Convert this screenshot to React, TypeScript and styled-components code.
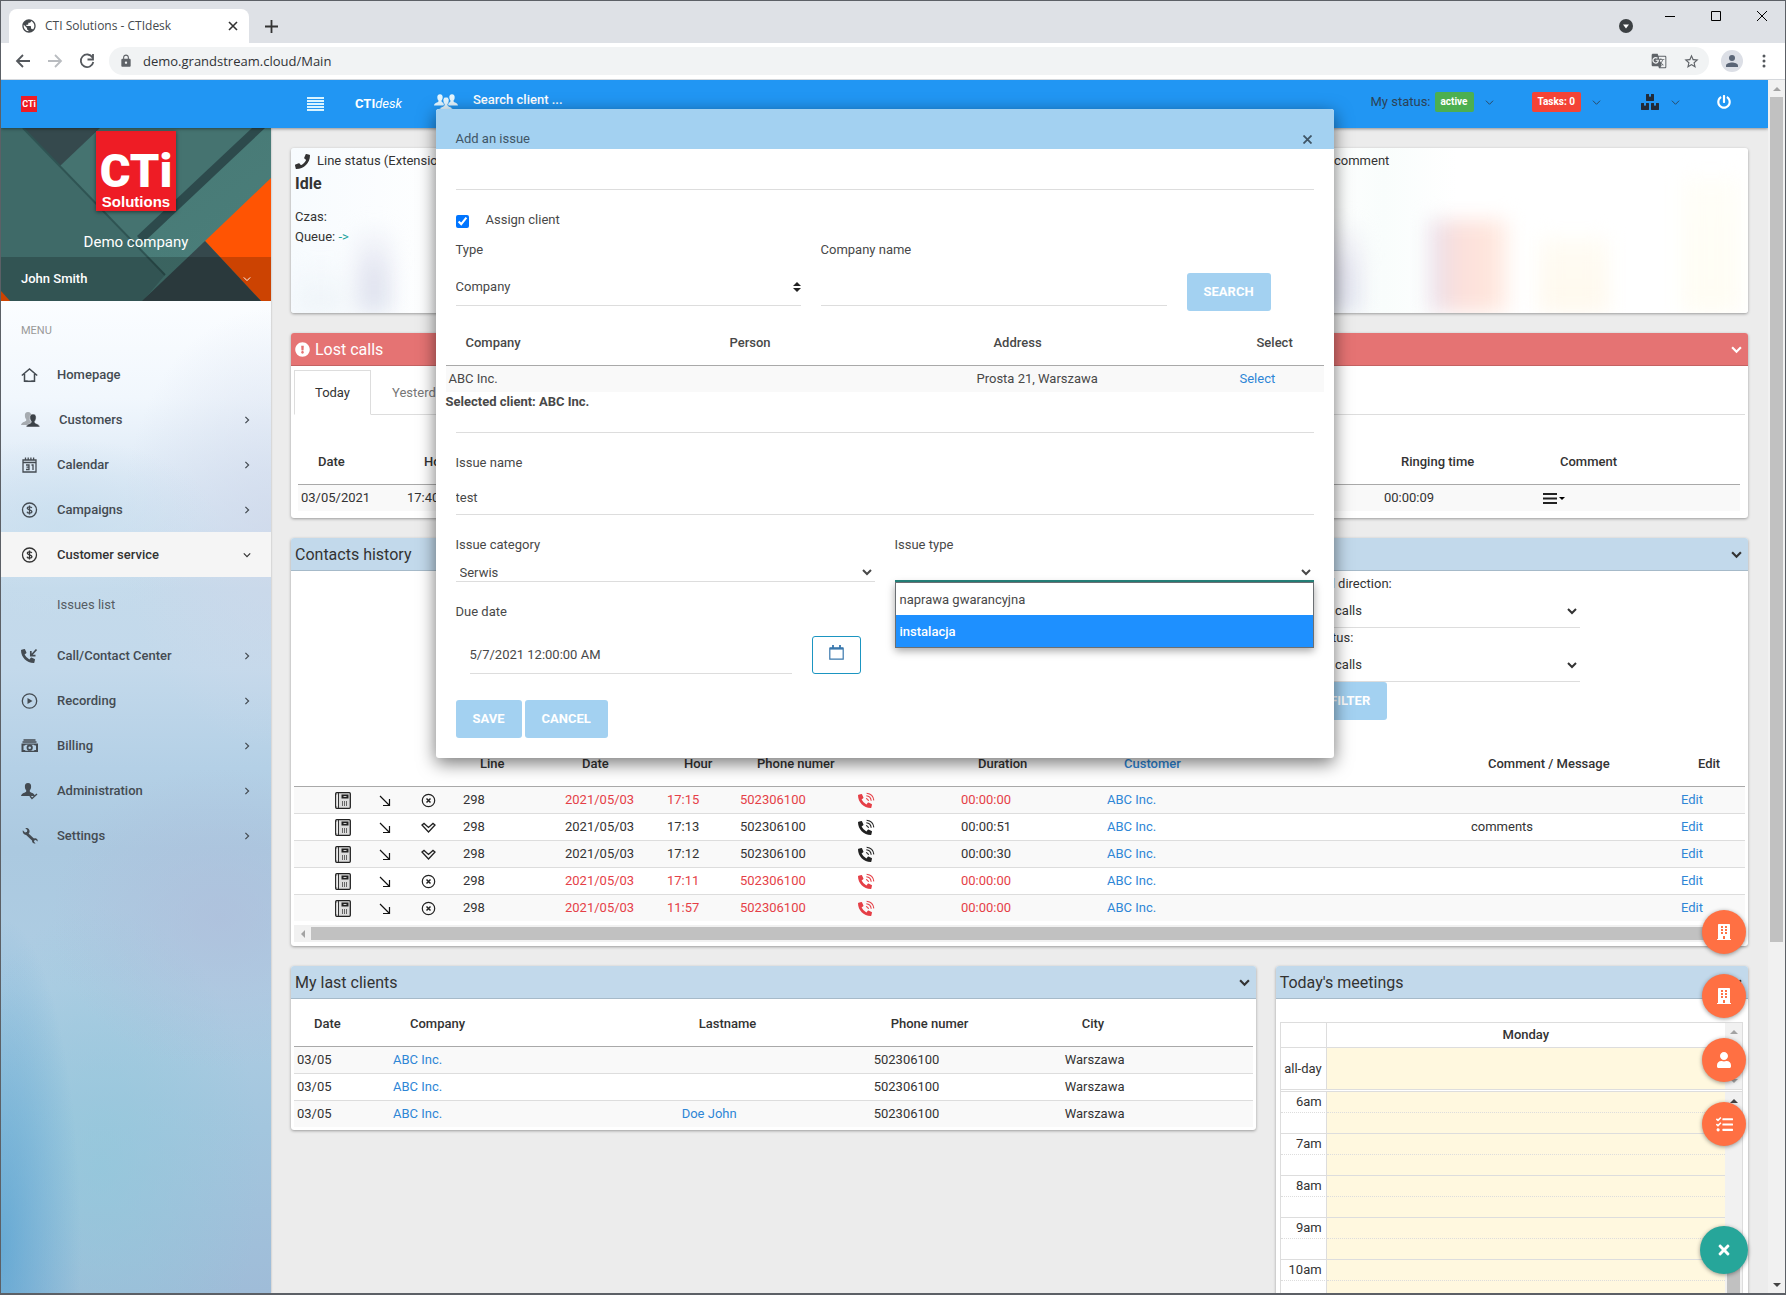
import React from "react";
import styled, { createGlobalStyle, css } from "styled-components";
import {
  FaBoxes,
  FaBuilding,
  FaExclamationCircle,
  FaPhone,
  FaPhoneAlt,
  FaPowerOff,
  FaTasks,
  FaTimes,
  FaUser,
  FaWrench,
} from "react-icons/fa";
import { MdGTranslate, MdLock, MdPublic, MdStarBorder } from "react-icons/md";

const c = {
  text: "#333",
  link: "#2e86d6",
  danger: "#e53f47",
  primary: "#2196f3",
  soft: "#a3d1f1",
  panel: "#c2d9eb",
  line: "#ddd",
};

const Global = createGlobalStyle`
  *, *::before, *::after { box-sizing: border-box; }
  body { margin: 0; color: ${c.text}; font: 13px/20px Roboto, "Liberation Sans", sans-serif; }
  button, input, select { font: inherit; color: inherit; }
  button { cursor: pointer; border: 0; padding: 0; background: none; }
  a { color: ${c.link}; text-decoration: none; }
  svg { display: block; flex: none; }
`;

/* ---------- browser window ---------- */

const Window = styled.div`
  display: flex;
  flex-direction: column;
  height: 100vh;
  overflow: hidden;
  border: 1px solid #5c6066;
  border-bottom-width: 2px;
  background: #fff;
`;
const TabStrip = styled.div`
  display: flex;
  align-items: flex-end;
  height: 42px;
  padding-left: 8px;
  background: #dee1e6;
  font: 12px/20px "Open Sans", "Noto Sans", sans-serif;
`;
const BrowserTab = styled.div`
  display: flex;
  align-items: center;
  gap: 8px;
  width: 240px;
  height: 34px;
  padding: 0 10px 0 12px;
  border-radius: 8px 8px 0 0;
  background: #fff;
  color: #45494d;
  span { flex: 1; }
`;
const NewTab = styled.button`
  display: grid;
  place-items: center;
  width: 28px;
  height: 34px;
  margin-left: 8px;
`;
const WindowButtons = styled.div`
  display: flex;
  align-self: flex-start;
  margin-left: auto;
`;
const WindowButton = styled.button`
  display: grid;
  place-items: center;
  width: 46px;
  height: 29px;
`;
const TabSearch = styled.button`
  display: grid;
  place-items: center;
  width: 42px;
  height: 50px;
`;
const Toolbar = styled.div`
  display: flex;
  align-items: center;
  height: 37px;
  padding: 0 18px 0 14px;
  border-bottom: 1px solid #d5d8dc;
  color: #5f6368;
`;
const NavButtons = styled.div`
  display: flex;
  gap: 16px;
  margin-right: 14px;
`;
const AddressBar = styled.div`
  display: flex;
  flex: 1;
  align-items: center;
  gap: 8px;
  height: 28px;
  padding: 0 9px 0 10px;
  border-radius: 14px;
  background: #f1f3f4;
`;
const Address = styled.input`
  flex: 1;
  min-width: 0;
  border: 0;
  outline: 0;
  background: none;
  color: #303236;
  font: 13px/20px "Open Sans", "Noto Sans", sans-serif;
`;
const AddressIcons = styled.div`
  display: flex;
  align-items: center;
  gap: 16px;
`;
const Avatar = styled.div`
  display: grid;
  place-items: center;
  width: 22px;
  height: 22px;
  margin: 0 18px 0 12px;
  border-radius: 50%;
  background: #dcdfe6;
  color: #5a6576;
`;

/* ---------- scroll bars ---------- */

const ScrollTrack = styled.div<{ $row?: boolean; $w: number }>`
  display: flex;
  flex: none;
  flex-direction: ${(p) => (p.$row ? "row" : "column")};
  align-items: center;
  justify-content: space-between;
  ${(p) => (p.$row ? `height: ${p.$w}px;` : `width: ${p.$w}px;`)}
  background: #f1f1f1;
`;
const Thumb = styled.div<{ $grow?: number; $row?: boolean }>`
  flex: ${(p) => p.$grow ?? 1};
  align-self: stretch;
  margin: ${(p) => (p.$row ? "2px 0" : "0 2px")};
  background: #c1c1c1;
`;
const TrackSpace = styled.div<{ $grow: number }>`
  flex: ${(p) => p.$grow};
`;
const ArrowBox = styled.div`
  display: grid;
  place-items: center;
  width: 17px;
  height: 17px;
`;
const Arrow = ({ dir, color = "#a3a3a3" }: { dir: "up" | "down" | "left" | "right"; color?: string }) => {
  const d = { up: "M0 6 4 2l4 4z", down: "M0 2l4 4 4-4z", left: "M6 0 2 4l4 4z", right: "M2 0l4 4-4 4z" }[dir];
  return (
    <ArrowBox>
      <svg width="8" height="8" viewBox="0 0 8 8" fill={color}><path d={d} /></svg>
    </ArrowBox>
  );
};

/* ---------- page shell ---------- */

const Viewport = styled.div`
  display: flex;
  flex: 1;
  min-height: 0;
`;
const Page = styled.div`
  position: relative;
  display: flex;
  flex: 1;
  flex-direction: column;
  min-width: 0;
  overflow: hidden;
  background: #ececec;
`;
const Header = styled.header`
  z-index: 1;
  display: flex;
  flex: none;
  height: 48px;
  padding: 0 37px 0 20px;
  background: ${c.primary};
  box-shadow: 0 1px 3px rgba(0, 0, 0, 0.4);
`;
const HeaderLeft = styled.div`
  display: flex;
  align-items: center;
  width: 286px;
`;
const Brand = styled.a`
  padding-left: 31px;
  color: #fff;
  white-space: nowrap;
`;
const BrandSlot = styled.div`
  display: flex;
  align-items: center;
  width: 127px;
`;
const SearchSlot = styled.div`
  display: flex;
  flex: 1;
  gap: 15px;
  padding-top: 10px;
  svg { margin-top: 4px; }
`;
const SearchField = styled.input`
  width: 260px;
  height: 20px;
  padding: 0;
  border: 0;
  outline: 0;
  background: none;
  font-weight: 500;
  &::placeholder { color: #fff; opacity: 1; }
`;
const HeaderRight = styled.div`
  display: flex;
  align-items: flex-start;
  padding-top: 12px;
  color: #2c4257;
`;
const HeaderItem = styled.button<{ $after: number }>`
  display: flex;
  align-items: center;
  height: 20px;
  margin-right: ${(p) => p.$after}px;
`;
const ItemGap = styled.span`
  width: 12px;
`;
const Badge = styled.span<{ $bg: string }>`
  padding: 0 6px;
  margin: 0 11px 0 4px;
  border-radius: 2px;
  background: ${(p) => p.$bg};
  color: #fff;
  font-size: 10px;
  font-weight: 700;
`;
const SmallLogo = styled.span`
  display: grid;
  place-items: center;
  width: 16px;
  height: 16px;
  background: #ee1c25;
  color: #fff;
  font: 700 9px/9px Roboto, sans-serif;
`;
const Body = styled.div`
  display: flex;
  flex: 1;
  min-height: 0;
`;

/* ---------- side menu ---------- */

const Sidebar = styled.aside`
  width: 270px;
  flex: none;
  overflow: hidden;
  box-shadow: 0 0 2px rgba(0, 0, 0, 0.25);
  background:
    radial-gradient(ellipse 80px 330px at 0 1120px, rgba(85, 162, 210, 0.75), transparent),
    radial-gradient(ellipse 170px 150px at 220px 790px, rgba(176, 188, 218, 0.6), transparent),
    radial-gradient(ellipse 160px 260px at 100px 1040px, rgba(145, 200, 219, 0.7), transparent),
    radial-gradient(ellipse 160px 90px at 60px 400px, rgba(200, 222, 238, 0.8), transparent),
    radial-gradient(ellipse 150px 220px at 270px 400px, rgba(208, 216, 234, 0.7), transparent),
    linear-gradient(#fbfdff 173px, #f1f7fd 270px, #dbe8f5 360px, #c4daeb 460px, #c3d9eb 540px, #b4d0e6 640px, #abc9e0 720px, #aecde3 860px, #a3c6de 1000px, #9fbcd8 1166px);
`;
const Profile = styled.div`
  position: relative;
  display: flex;
  flex-direction: column;
  align-items: center;
  height: 173px;
  padding-top: 3px;
  color: #fff;
`;
const ProfileArt = styled.svg`
  position: absolute;
  inset: 0;
  width: 100%;
  height: 100%;
`;
const Logo = styled.div`
  position: relative;
  display: flex;
  flex-direction: column;
  align-items: center;
  justify-content: flex-end;
  width: 80px;
  height: 80px;
  padding-bottom: 1px;
  background: #ee1c25;
  box-shadow: 0 1px 4px rgba(0, 0, 0, 0.5);
`;
const LogoMark = styled.div`
  font: 900 47px/44px Roboto, sans-serif;
`;
const LogoSub = styled.div`
  font: 700 15px/17px "Liberation Sans", sans-serif;
`;
const CompanyName = styled.div`
  position: relative;
  margin-top: 20px;
  font-size: 15px;
  line-height: 22px;
`;
const UserBar = styled.button`
  position: relative;
  display: flex;
  align-items: center;
  justify-content: space-between;
  width: 100%;
  height: 44px;
  margin-top: auto;
  padding: 0 20px;
  background: rgba(0, 0, 0, 0.2);
  color: #fff;
  font-weight: 500;
`;
const MenuTitle = styled.div`
  padding: 20px 20px 11px;
  color: #999;
  font-size: 11px;
`;
const MenuList = styled.ul`
  margin: 0;
  padding: 0;
  list-style: none;
`;
const MenuLink = styled.a<{ $active?: boolean }>`
  display: flex;
  align-items: center;
  height: 45px;
  padding: 0 20px;
  background: ${(p) => (p.$active ? "#f5f5f5" : "transparent")};
  color: ${(p) => (p.$active ? "#333" : "#444b52")};
  font-weight: 500;
  span { flex: 1; padding-left: 18px; }
`;
const SubLink = styled.a`
  display: block;
  padding: 18px 20px 18px 56px;
  color: #555c63;
`;

/* ---------- cards and tables ---------- */

const Content = styled.main`
  flex: 1;
  min-width: 0;
  padding: 20px;
  display: flex;
  flex-direction: column;
  gap: 20px;
`;
const Card = styled.section`
  flex: none;
  border-radius: 3px;
  background: #fff;
  box-shadow: 0 1px 3px rgba(0, 0, 0, 0.35);
`;
const CardHead = styled.div<{ $alert?: boolean }>`
  display: flex;
  align-items: center;
  gap: 5px;
  height: 33px;
  padding: 1px 6px 0 4px;
  border-bottom: 1px solid rgba(0, 0, 0, 0.14);
  border-radius: 3px 3px 0 0;
  background: ${(p) => (p.$alert ? "#e57373" : c.panel)};
  color: ${(p) => (p.$alert ? "#fff" : c.text)};
  h2 { flex: 1; margin: 0; font-size: 16px; font-weight: 400; }
`;
const StatusCard = styled(Card)`
  position: relative;
  display: grid;
  grid-template-columns: 1039px 1fr;
  height: 165px;
  padding: 3px 4px;
  overflow: hidden;
  background: linear-gradient(90deg, #f7fbfe, #fff 12%, #fff 70%, #f9fdfc 75%, #fff 80%);
`;
const Blur = styled.div`
  position: absolute;
  inset: 0;
  filter: blur(10px);
  background:
    linear-gradient(#e6e8f300, #e2e4f0 40%, #dce4ef) 66px 75px / 34px 130px no-repeat,
    linear-gradient(#eef4f900, #e9f0f6) 5px 110px / 50px 80px no-repeat,
    linear-gradient(#e4e6f300, #e4e4ef 40%, #dde4ef) 1020px 70px / 50px 130px no-repeat,
    linear-gradient(90deg, #e6e0ee, #fbdfdb 35%, #ffe6dc 80%, #fff4ee) 1138px 72px / 80px 130px no-repeat,
    linear-gradient(#fffcf4, #fff7e9) 1248px 90px / 70px 120px no-repeat,
    linear-gradient(#fffef8, #fffdf3) 1390px 30px / 60px 150px no-repeat;
`;
const StatusBlock = styled.div`
  position: relative;
`;
const LineStatus = styled.div`
  display: flex;
  align-items: center;
  gap: 7px;
`;
const Idle = styled.h3`
  margin: 2px 0 12px;
  font-size: 16px;
  line-height: 22px;
  font-weight: 700;
`;
const TealText = styled.a`
  color: #1ba39c;
`;
const Tabs = styled.div`
  display: flex;
  height: 49px;
  margin: 0 3px;
  padding-top: 4px;
  box-shadow: inset 0 -1px #ddd;
`;
const Tab = styled.button<{ $on?: boolean }>`
  padding: 0 20px;
  border: 1px solid transparent;
  color: #777;
  ${(p) => p.$on && css`background: #fff; border-color: #ddd #ddd #fff; color: ${c.text};`}
`;
const Table = styled.table`
  width: 100%;
  table-layout: fixed;
  border-collapse: separate;
  border-spacing: 0;
  th {
    padding: 12px 20px;
    border-bottom: 1px solid #a9a9a9;
    text-align: left;
    font-weight: 500;
    white-space: nowrap;
  }
  td { padding: 3px; white-space: nowrap; }
  tbody tr + tr td { border-top: 1px solid ${c.line}; }
  tbody tr:nth-child(odd) td { background: #f9f9f9; }
  td svg { display: inline-block; vertical-align: middle; }
`;
const Pad = styled.div<{ $p: string }>`
  padding: ${(p) => p.$p};
`;
const Red = styled.span<{ $on: boolean }>`
  color: ${(p) => (p.$on ? c.danger : "inherit")};
`;
const Filters = styled.form`
  display: flex;
  flex-direction: column;
  align-items: flex-start;
  width: 267px;
  margin: 3px 168px 22px auto;
`;
const NativeSelect = styled.select<{ $h: number }>`
  width: 100%;
  height: ${(p) => p.$h}px;
  border: 0;
  border-bottom: 1px solid ${c.line};
  border-radius: 0;
  outline: 0;
  background: transparent;
`;
const SoftButton = styled.button`
  height: 38px;
  padding: 0 17px;
  border-radius: 3px;
  background: ${c.soft};
  color: #fff;
  font-weight: 700;
  text-transform: uppercase;
`;
const MenuButton = styled.button`
  display: flex;
  align-items: center;
  gap: 2px;
  height: 20px;
  svg { display: block; }
`;
const BarGap = styled.div`
  padding-top: 4px;
`;
const Columns = styled.div`
  display: grid;
  grid-template-columns: calc((100% + 20px) * 2 / 3 - 20px) 1fr;
  gap: 20px;
  align-items: start;
`;

/* ---------- day calendar ---------- */

const DayBox = styled.div`
  margin: 23px 5px 0 4px;
  border: 1px solid ${c.line};
`;
const DayPart = styled.div<{ $divider?: boolean }>`
  display: flex;
  ${(p) => p.$divider && css`border-bottom: 3px double ${c.line};`}
`;
const DayTable = styled.table`
  flex: 1;
  table-layout: fixed;
  border-collapse: separate;
  border-spacing: 0;
  th, td { padding: 0; border-bottom: 1px solid ${c.line}; font-weight: 400; }
  th:first-child { width: 46px; padding-right: 4px; border-right: 1px solid ${c.line}; text-align: right; }
  td { background: #fff8df; }
  tr:last-child > * { border-bottom: 0; }
  thead tr:last-child > * { border-bottom: 1px solid ${c.line}; }
  thead th + th { font-weight: 500; }
`;
const DayRow = styled.tr<{ $h: number; $half?: boolean }>`
  height: ${(p) => p.$h}px;
  ${(p) => p.$half && css`&& > * { border-bottom: 1px dotted ${c.line}; }`}
`;

/* ---------- floating buttons ---------- */

const Floating = styled.div`
  position: absolute;
  z-index: 2;
  right: 20px;
  bottom: 19px;
  display: flex;
  flex-direction: column;
  align-items: center;
  gap: 20px;
`;
const RoundButton = styled.button<{ $main?: boolean }>`
  display: grid;
  place-items: center;
  width: ${(p) => (p.$main ? 48 : 44)}px;
  height: ${(p) => (p.$main ? 48 : 44)}px;
  margin-top: ${(p) => (p.$main ? 60 : 0)}px;
  border-radius: 50%;
  background: ${(p) => (p.$main ? "#26a69a" : "#ff7043")};
  color: #fff;
  box-shadow: 0 1px 4px rgba(0, 0, 0, 0.4);
`;

/* ---------- dialog ---------- */

const Dialog = styled.div`
  position: absolute;
  z-index: 3;
  top: 29px;
  left: 0;
  right: 0;
  width: 898px;
  margin: 0 auto;
  border-radius: 3px;
  background: #fff;
  color: #484848;
  box-shadow: 0 5px 18px rgba(0, 0, 0, 0.55);
`;
const DialogHead = styled.div`
  display: flex;
  align-items: flex-end;
  justify-content: space-between;
  height: 40px;
  padding: 0 20px;
  border-radius: 3px 3px 0 0;
  background: ${c.soft};
  color: #3f5566;
  button { display: grid; place-items: center; width: 12px; height: 20px; }
`;
const DialogBody = styled.form`
  padding: 0 20px 20px;
`;
const Rule = styled.hr<{ $m: string }>`
  margin: ${(p) => p.$m};
  border: 0;
  border-top: 1px solid ${c.line};
`;
const CheckRow = styled.label`
  display: flex;
  align-items: center;
  gap: 17px;
  margin-bottom: 10px;
  input { width: 13px; height: 13px; margin: 2px 0 0; accent-color: #0075ff; }
`;
const SearchRow = styled.div`
  display: grid;
  grid-template-columns: 345px 346px auto;
  column-gap: 20px;
  align-items: end;
  justify-content: start;
  margin-bottom: 10px;
`;
const Field = styled.div`
  display: flex;
  flex-direction: column;
  gap: 8px;
`;
const TextInput = styled.input<{ $h: number }>`
  width: 100%;
  height: ${(p) => p.$h}px;
  padding: 0;
  border: 0;
  border-bottom: 1px solid ${c.line};
  outline: 0;
  background: none;
`;
const SpinSelect = styled.div`
  position: relative;
  select {
    width: 100%;
    height: 38px;
    padding: 0;
    border: 0;
    border-bottom: 1px solid ${c.line};
    appearance: none;
    background: none;
  }
  svg { position: absolute; right: 0; top: 14px; pointer-events: none; }
`;
const SearchEnd = styled.div`
  height: 33px;
`;
const Wide = styled.div`
  margin: 0 -10px;
`;
const TwoCols = styled.div`
  display: grid;
  grid-template-columns: 1fr 1fr;
  column-gap: 20px;
  margin: 20px 0;
`;
const TypeField = styled(Field)`
  position: relative;
  select { border-bottom: 2px solid #26867d; }
`;
const Options = styled.ul`
  position: absolute;
  z-index: 1;
  top: 100%;
  left: 0;
  right: 0;
  margin: 0;
  padding: 0;
  list-style: none;
  border: 1px solid #6b6f73;
  background: #fff;
  box-shadow: 0 3px 8px rgba(0, 0, 0, 0.35);
`;
const Option = styled.li<{ $on?: boolean }>`
  height: 32px;
  padding: 0 4px;
  line-height: 34px;
  ${(p) => p.$on && css`background: #1e90ff; color: #fff; font-weight: 500;`}
`;
const DateRow = styled.div`
  display: flex;
  align-items: flex-end;
  gap: 20px;
  margin: 14px 0 26px 14px;
  input { width: 322px; }
`;
const OutlineButton = styled.button`
  display: grid;
  place-items: center;
  width: 49px;
  height: 38px;
  padding-bottom: 6px;
  border: 1px solid #1b95c1;
  border-radius: 3px;
  color: #3a78ad;
`;
const Actions = styled.div`
  display: flex;
  gap: 3px;
`;

/* ---------- drawn icons ---------- */

const Chevron = ({ dir = "down", size = 8, w = 1.5 }: { dir?: "down" | "right"; size?: number; w?: number }) => (
  <svg width={size} height={size} viewBox="0 0 10 10" fill="none" stroke="currentColor" strokeWidth={w}>
    <path d={dir === "down" ? "M1 3l4 4 4-4" : "M3 1l4 4-4 4"} />
  </svg>
);
const Box = ({ children, w = 18 }: { children: React.ReactNode; w?: number }) => (
  <svg width={w} height="18" viewBox={`0 0 ${w} 18`} fill="none" stroke="currentColor" strokeWidth="1.3">{children}</svg>
);
const person = "M7 1c2.300 0 3.300 1.600 3.100 3.900-.1 1.700-.7 2.600-1.300 3.300v1.300c.5 1.200 4.700 1.500 5.200 4.500H0c.5-3 4.700-3.300 5.200-4.500V8.200C4.600 7.500 4 6.600 3.900 4.900 3.700 2.600 4.700 1 7 1z";
const HomeIcon = () => <Box><path d="M.8 9.500 8.500 3l7.700 6.500M3.500 8v7.300h3.200M10.300 15.300h3.200V8" strokeWidth="1.500" /><path d="M3.500 15.300h10" strokeWidth="1.500" /></Box>;
const CustomersIcon = () => (
  <svg width="20" height="18" viewBox="0 0 20 18"><path d={person} fill="#a6abb0" /><path d={person} transform="translate(5 2)" fill="#3c4248" stroke="#eef3f8" strokeWidth=".5" /></svg>
);
const CalendarIcon = () => (
  <Box><path d="M2 4h13v12H2zM2 6.500h13M4.500 1.500V4M7.200 1.500V4M9.900 1.500V4M12.600 1.500V4M5 9h3v4.500H5M5.500 11.200H8M10.500 9H12v5" /></Box>
);
const DollarIcon = () => (
  <Box><circle cx="8.500" cy="9" r="7" /><path d="M10.800 7c-.3-.8-1.100-1.200-2.300-1.200-1.400 0-2.200.6-2.200 1.500 0 2.200 4.600 1 4.600 3.300 0 1-.9 1.600-2.400 1.600-1.300 0-2.200-.5-2.500-1.400M8.500 4.500v9" /></Box>
);
const IncomingIcon = () => (
  <Box><FaPhoneAlt x={0} y={2} size={14} stroke="none" /><path d="M15.500 2.500 10.500 8M9.800 4v4.600h4.700" strokeWidth="1.700" /></Box>
);
const PlayIcon = () => <Box><circle cx="8.500" cy="9" r="7.200" /><path d="M6.500 6v6l5-3z" fill="currentColor" stroke="none" /></Box>;
const BillingIcon = () => (
  <Box><path d="M2.500 3h12M1.500 5h14" /><path d="M.5 6.500h16.500V15H.5zM2.500 8.500v4.500h1.200l1 .8h8l1-.8H15V8.500h-1.200l-1-.8h-8l-1 .8z" fill="currentColor" fillRule="evenodd" stroke="none" /><circle cx="8.700" cy="10.700" r="2.200" strokeWidth="1.800" /></Box>
);
const AdminIcon = () => (
  <Box><path d={person} fill="currentColor" stroke="none" /><path d="M9 14l2 2.500L16 12" strokeWidth="1.400" /></Box>
);
const SettingsIcon = () => (
  <Box>
    <path d="M5 6l8 7.500" strokeWidth="2.800" />
    <path d="M1.800 3.200 4 5.400l1.900-.4.400-1.900L4.300 1.200c1.700-.4 3.300.2 4 1.700.6 1.400.3 2.900-.8 3.900s-2.600 1.200-3.900.6C2.100 6.600 1.400 4.900 1.800 3.200z" fill="currentColor" stroke="none" />
    <path d="M16.600 14.600l-1.800-1.700-1.500.3-.3 1.500 1.600 1.800c-1.400.3-2.700-.2-3.300-1.400-.5-1.100-.2-2.400.7-3.200.9-.8 2.100-1 3.200-.5 1.200.6 1.800 1.900 1.400 3.200z" fill="currentColor" stroke="none" />
  </Box>
);
const GroupIcon = () => (
  <svg width="24" height="16" viewBox="0 0 28 18" fill="#e4f6ff"><path d={person} transform="translate(0 -1)" /><path d={person} transform="translate(14 -1)" /><path d={person} transform="translate(6 2) scale(1.150)" stroke="#2196f3" strokeWidth=".8" /></svg>
);
const PhoneBookIcon = () => (
  <svg width="16" height="17" viewBox="0 0 16 17"><rect x=".7" y=".7" width="14.600" height="15.600" rx="1" fill="#ddd" stroke="#222" strokeWidth="1.300" /><path d="M3.500 1v15" stroke="#333" strokeWidth="1" /><path d="M2 3v11" stroke="#fff" /><rect x="6.500" y="2.500" width="7" height="4" fill="#222" /><path d="M8.500 4.500h3" stroke="#ccc" /><path d="M7.500 9v5M9.500 9v5M11.500 9v5" stroke="#666" /></svg>
);
const DirectionIcon = () => (
  <svg width="12" height="12" viewBox="0 0 12 12" fill="none" stroke="#111" strokeWidth="1.200"><path d="M1 1l9.500 9.500M10.500 4v6.500H4" /></svg>
);
const MissedIcon = () => (
  <svg width="15" height="15" viewBox="0 0 15 15" fill="none" stroke="#222" strokeWidth="1.200"><circle cx="7.500" cy="7.500" r="6.200" /><path d="M5.500 5.500l4 4M9.500 5.500l-4 4" strokeWidth="1.500" /></svg>
);
const AnsweredIcon = () => (
  <svg width="15" height="15" viewBox="0 0 15 15" fill="none" stroke="#222" strokeWidth="1.300"><path d="M1 5l2-1.600 4.500 4L12 3.400 14 5l-6.500 7z" /></svg>
);
const CallIcon = ({ color }: { color: string }) => (
  <svg width="17" height="17" viewBox="0 0 17 17" fill={color} stroke={color}>
    <FaPhoneAlt x={0} y={2} size={14} stroke="none" color={color} />
    <path d="M8 6.500c1.500.2 2.300 1 2.500 2.500M8.300 3.800c2.900.3 4.600 2 4.900 4.900M8.600 1.200c4.200.4 6.800 3 7.200 7.200" fill="none" strokeWidth="1.100" />
  </svg>
);

const CtiLogo = () => (
  <Logo>
    <LogoMark>CTi</LogoMark>
    <LogoSub>Solutions</LogoSub>
  </Logo>
);

/* ---------- data ---------- */

const menuTop = [
  { label: "Homepage", icon: <HomeIcon />, leaf: true },
  { label: "Customers", icon: <CustomersIcon /> },
  { label: "Calendar", icon: <CalendarIcon /> },
  { label: "Campaigns", icon: <DollarIcon /> },
];
const menuBottom = [
  { label: "Call/Contact Center", icon: <IncomingIcon /> },
  { label: "Recording", icon: <PlayIcon /> },
  { label: "Billing", icon: <BillingIcon /> },
  { label: "Administration", icon: <AdminIcon /> },
  { label: "Settings", icon: <SettingsIcon /> },
];
const calls = [
  { hour: "17:15", missed: true, duration: "00:00:00", comment: "" },
  { hour: "17:13", missed: false, duration: "00:00:51", comment: "comments" },
  { hour: "17:12", missed: false, duration: "00:00:30", comment: "" },
  { hour: "17:11", missed: true, duration: "00:00:00", comment: "" },
  { hour: "11:57", missed: true, duration: "00:00:00", comment: "" },
];
const clients = ["", "", "Doe John"];
const hours = ["6am", "7am", "8am", "9am", "10am"];

const Cols = ({ widths }: { widths: (number | null)[] }) => (
  <colgroup>
    {widths.map((w, i) => (w === null ? <col key={i} /> : <col key={i} width={w} />))}
  </colgroup>
);

const MenuItem = ({ label, icon, leaf }: { label: string; icon: React.ReactNode; leaf?: boolean }) => (
  <li>
    <MenuLink href="#">{icon}<span>{label}</span>{!leaf && <Chevron dir="right" />}</MenuLink>
  </li>
);

const BrowserChrome = () => (
  <>
    <TabStrip>
      <BrowserTab>
        <MdPublic size={16} /><span>CTI Solutions - CTIdesk</span>
        <svg width="12" height="12" viewBox="0 0 12 12" stroke="#333" strokeWidth="1.600"><path d="M2 2l8 8M10 2l-8 8" /></svg>
      </BrowserTab>
      <NewTab aria-label="New tab"><svg width="13" height="13" viewBox="0 0 13 13" stroke="#333" strokeWidth="1.800"><path d="M6.500 0v13M0 6.500h13" /></svg></NewTab>
      <WindowButtons>
        <TabSearch aria-label="Search tabs"><svg width="14" height="14" viewBox="0 0 14 14"><circle cx="7" cy="7" r="7" fill="#3c4043" /><path d="M4 5.500h6L7 9.500z" fill="#fff" /></svg></TabSearch>
        <WindowButton aria-label="Minimize"><svg width="10" height="10" viewBox="0 0 10 10" stroke="#000"><path d="M0 5.500h10" /></svg></WindowButton>
        <WindowButton aria-label="Maximize"><svg width="10" height="10" viewBox="0 0 10 10" fill="none" stroke="#000"><path d="M.5.500h9v9h-9z" /></svg></WindowButton>
        <WindowButton aria-label="Close"><svg width="10" height="10" viewBox="0 0 10 10" stroke="#000"><path d="M0 0l10 10M10 0 0 10" /></svg></WindowButton>
      </WindowButtons>
    </TabStrip>
    <Toolbar>
      <NavButtons>
        <svg width="16" height="16" viewBox="0 0 16 16" fill="none" stroke="#54585d" strokeWidth="1.800"><path d="M15 8H2M8 2 2 8l6 6" /></svg>
        <svg width="16" height="16" viewBox="0 0 16 16" fill="none" stroke="#b9bcc0" strokeWidth="1.800"><path d="M1 8h13M8 2l6 6-6 6" /></svg>
        <svg width="16" height="16" viewBox="0 0 16 16" fill="none" stroke="#54585d" strokeWidth="1.800"><path d="M13.500 4.500A6.300 6.300 0 1 0 14.300 9M14 1v5.500H8.500" /></svg>
      </NavButtons>
      <AddressBar>
        <MdLock size={14} />
        <Address aria-label="Address" defaultValue="demo.grandstream.cloud/Main" />
        <AddressIcons><MdGTranslate size={16} /><MdStarBorder size={17} /></AddressIcons>
      </AddressBar>
      <Avatar><svg width="14" height="14" viewBox="0 0 14 14" fill="currentColor"><circle cx="7" cy="4" r="3" /><path d="M1 13v-1.500C1 9.500 4.500 8.500 7 8.500s6 1 6 3V13z" /></svg></Avatar>
      <svg width="6" height="14" viewBox="0 0 6 14" fill="#54585d"><circle cx="3" cy="2" r="1.500" /><circle cx="3" cy="7" r="1.500" /><circle cx="3" cy="12" r="1.500" /></svg>
    </Toolbar>
  </>
);

const TopBar = () => (
  <Header>
    <HeaderLeft><SmallLogo>CTi</SmallLogo></HeaderLeft>
    <BrandSlot>
      <svg width="17" height="15" viewBox="0 0 17 15" stroke="#d9f4ff" strokeWidth="2" shapeRendering="crispEdges"><path d="M0 1h17M0 4h17M0 7h17M0 10h17M0 13h17" /></svg>
      <Brand href="#"><b>CTI</b><i>desk</i></Brand>
    </BrandSlot>
    <SearchSlot>
      <GroupIcon />
      <SearchField aria-label="Search client" placeholder="Search client ..." />
    </SearchSlot>
    <HeaderRight>
      <HeaderItem $after={34}>My status: <Badge $bg="#4caf50">active</Badge><Chevron size={9} w={1} /></HeaderItem>
      <HeaderItem $after={40}><Badge $bg="#f44336">Tasks: 0</Badge><Chevron size={9} w={1} /></HeaderItem>
      <HeaderItem $after={37}><FaBoxes size={18} color="#222b38" /><ItemGap /><Chevron size={9} w={1} /></HeaderItem>
      <HeaderItem $after={0} aria-label="Log out"><FaPowerOff size={14} color="#fff" /></HeaderItem>
    </HeaderRight>
  </Header>
);

const SideMenu = () => (
  <Sidebar>
    <Profile>
      <ProfileArt viewBox="0 0 270 173" preserveAspectRatio="none" aria-hidden="true">
        <defs>
          <linearGradient id="teal" x1="0" y1="0" x2="1" y2="1"><stop offset="0" stopColor="#467773" /><stop offset="1" stopColor="#4b7f7b" /></linearGradient>
        </defs>
        <path d="M0 0h270v173H0z" fill="url(#teal)" />
        <path d="M59 38 99 0h160L137 118z" fill="#457370" />
        <path d="M0 0h22l142 147-22 26H0z" fill="#3f6a68" />
        <path d="M22 0h77L59 38z" fill="#35494d" />
        <path d="M22 0l142 147" stroke="#2f5453" strokeWidth="2" />
        <path d="M251 0h13L142 115l-6-7z" fill="#2d4a4c" />
        <path d="M204 113 270 50v123h-10z" fill="#ff5403" />
        <path d="M204 113 141 173h119z" fill="#35484c" />
        <path d="M0 163l9 10H0z" fill="#ff5403" />
      </ProfileArt>
      <CtiLogo />
      <CompanyName>Demo company</CompanyName>
      <UserBar>John Smith<Chevron w={1.2} /></UserBar>
    </Profile>
    <MenuTitle>MENU</MenuTitle>
    <MenuList>
      {menuTop.map((m) => <MenuItem key={m.label} {...m} />)}
      <li>
        <MenuLink href="#" $active><DollarIcon /><span>Customer service</span><Chevron /></MenuLink>
        <SubLink href="#">Issues list</SubLink>
      </li>
      {menuBottom.map((m) => <MenuItem key={m.label} {...m} />)}
    </MenuList>
  </Sidebar>
);

const LineCard = () => (
  <StatusCard>
    <Blur />
    <StatusBlock>
      <LineStatus><FaPhone size={15} />Line status (Extension: 298)</LineStatus>
      <Idle>Idle</Idle>
      <div>Czas:</div>
      <div>Queue: <TealText href="#">-&gt;</TealText></div>
    </StatusBlock>
    <StatusBlock>comment</StatusBlock>
  </StatusCard>
);

const LostCalls = () => (
  <Card>
    <CardHead $alert><FaExclamationCircle size={15} /><h2>Lost calls</h2><Chevron size={11} w={2} /></CardHead>
    <Tabs><Tab $on>Today</Tab><Tab>Yesterday</Tab></Tabs>
    <Pad $p="25px 8px 7px 7px">
      <Table>
        <Cols widths={[106, null, 159, 200]} />
        <thead><tr><th>Date</th><th>Hour</th><th>Ringing time</th><th>Comment</th></tr></thead>
        <tbody>
          <tr>
            <td>03/05/2021</td><td>17:40</td><td>00:00:09</td>
            <td>
              <MenuButton aria-label="Comment menu">
                <svg width="14" height="11" viewBox="0 0 14 11" stroke="#222" strokeWidth="2"><path d="M0 1h14M0 5.500h14M0 10h14" /></svg>
                <svg width="6" height="3" viewBox="0 0 6 3"><path d="M0 0h6L3 3z" /></svg>
              </MenuButton>
            </td>
          </tr>
        </tbody>
      </Table>
    </Pad>
  </Card>
);

const ContactsTable = () => (
  <Table>
    <Cols widths={[38, 44, 42, 42, 102, 102, 73, 118, 103, 146, null, 210, 67]} />
    <thead>
      <tr>
        <th /><th /><th /><th /><th>Line</th><th>Date</th><th>Hour</th><th>Phone numer</th><th />
        <th>Duration</th><th><a href="#">Customer</a></th><th>Comment / Message</th><th>Edit</th>
      </tr>
    </thead>
    <tbody>
      {calls.map((r) => (
        <tr key={r.hour}>
          <td />
          <td><PhoneBookIcon /></td>
          <td><DirectionIcon /></td>
          <td>{r.missed ? <MissedIcon /> : <AnsweredIcon />}</td>
          <td>298</td>
          <td><Red $on={r.missed}>2021/05/03</Red></td>
          <td><Red $on={r.missed}>{r.hour}</Red></td>
          <td><Red $on={r.missed}>502306100</Red></td>
          <td><CallIcon color={r.missed ? c.danger : "#222"} /></td>
          <td><Red $on={r.missed}>{r.duration}</Red></td>
          <td><a href="#">ABC Inc.</a></td>
          <td>{r.comment}</td>
          <td><a href="#">Edit</a></td>
        </tr>
      ))}
    </tbody>
  </Table>
);

const ContactsHistory = () => (
  <Card>
    <CardHead><h2>Contacts history</h2><Chevron size={11} w={2} /></CardHead>
    <Filters>
      <label htmlFor="direction">Call direction:</label>
      <NativeSelect id="direction" $h={34}><option>All calls</option></NativeSelect>
      <label htmlFor="status">Status:</label>
      <NativeSelect id="status" $h={34}><option>All calls</option></NativeSelect>
      <SoftButton type="button">Filter</SoftButton>
    </Filters>
    <Pad $p="0 3px 4px">
      <ContactsTable />
      <BarGap><ScrollTrack $row $w={17}><Arrow dir="left" /><Thumb $row /><Arrow dir="right" /></ScrollTrack></BarGap>
    </Pad>
  </Card>
);

const LastClients = () => (
  <Card>
    <CardHead><h2>My last clients</h2><Chevron size={11} w={2} /></CardHead>
    <Pad $p="3px">
      <Table>
        <Cols widths={[96, null, 192, 191, 191]} />
        <thead><tr><th>Date</th><th>Company</th><th>Lastname</th><th>Phone numer</th><th>City</th></tr></thead>
        <tbody>
          {clients.map((name, i) => (
            <tr key={i}>
              <td>03/05</td><td><a href="#">ABC Inc.</a></td><td>{name && <a href="#">{name}</a>}</td><td>502306100</td><td>Warszawa</td>
            </tr>
          ))}
        </tbody>
      </Table>
    </Pad>
  </Card>
);

const Meetings = () => (
  <Card>
    <CardHead><h2>Today's meetings</h2><Chevron size={11} w={2} /></CardHead>
    <DayBox>
      <DayPart $divider>
        <DayTable>
          <thead><DayRow $h={25}><th /><th>Monday</th></DayRow></thead>
          <tbody><DayRow $h={41}><th>all-day</th><td /></DayRow></tbody>
        </DayTable>
        <ScrollTrack $w={17}><Arrow dir="up" /><Arrow dir="down" /></ScrollTrack>
      </DayPart>
      <DayPart>
        <DayTable>
          <tbody>
            {hours.map((h) => (
              <React.Fragment key={h}>
                <DayRow $h={21} $half><th>{h}</th><td /></DayRow>
                <DayRow $h={21}><th /><td /></DayRow>
              </React.Fragment>
            ))}
          </tbody>
        </DayTable>
        <ScrollTrack $w={17}><Arrow dir="up" color="#444" /><TrackSpace $grow={6} /><Thumb $grow={2} /></ScrollTrack>
      </DayPart>
    </DayBox>
  </Card>
);

const IssueDialog = () => (
  <Dialog role="dialog" aria-labelledby="issue-title">
    <DialogHead>
      <span id="issue-title">Add an issue</span>
      <button aria-label="Close"><svg width="9" height="9" viewBox="0 0 9 9" stroke="#3f5566" strokeWidth="1.800"><path d="M.5.500l8 8M8.500.500l-8 8" /></svg></button>
    </DialogHead>
    <DialogBody>
      <Rule $m="40px 0 20px" />
      <CheckRow><input type="checkbox" defaultChecked />Assign client</CheckRow>
      <SearchRow>
        <Field>
          <label htmlFor="kind">Type</label>
          <SpinSelect>
            <select id="kind"><option>Company</option></select>
            <svg width="8" height="10" viewBox="0 0 8 10" fill="#222"><path d="M0 4l4-4 4 4zM0 6l4 4 4-4z" /></svg>
          </SpinSelect>
        </Field>
        <Field><label htmlFor="cname">Company name</label><TextInput id="cname" $h={38} /></Field>
        <SearchEnd><SoftButton type="button">Search</SoftButton></SearchEnd>
      </SearchRow>
      <Wide>
        <Pad $p="5px 0 0">
          <Table>
            <Cols widths={[264, 264, null, 87]} />
            <thead><tr><th>Company</th><th>Person</th><th>Address</th><th>Select</th></tr></thead>
            <tbody><tr><td>ABC Inc.</td><td /><td>Prosta 21, Warszawa</td><td><a href="#">Select</a></td></tr></tbody>
          </Table>
        </Pad>
        <b>Selected client: ABC Inc.</b>
      </Wide>
      <Rule $m="20px 0" />
      <Field><label htmlFor="iname">Issue name</label><TextInput id="iname" $h={34} defaultValue="test" /></Field>
      <TwoCols>
        <Field>
          <label htmlFor="cat">Issue category</label>
          <NativeSelect id="cat" $h={19}><option>Serwis</option></NativeSelect>
        </Field>
        <TypeField>
          <label htmlFor="itype">Issue type</label>
          <NativeSelect id="itype" $h={19}><option aria-label="none" /></NativeSelect>
          <Options role="listbox" aria-label="Issue type">
            <Option role="option">naprawa gwarancyjna</Option>
            <Option role="option" aria-selected $on>instalacja</Option>
          </Options>
        </TypeField>
      </TwoCols>
      <label htmlFor="due">Due date</label>
      <DateRow>
        <TextInput id="due" $h={38} defaultValue="5/7/2021 12:00:00 AM" />
        <OutlineButton type="button" aria-label="Pick date">
          <svg width="15" height="15" viewBox="0 0 15 15" fill="none" stroke="currentColor" strokeWidth="1.200"><path d="M.8 3h13.400v11.200H.8z" /><path d="M1 3.500h13" strokeWidth="2.200" /><path d="M4 0v4M11 0v4" strokeWidth="1.800" /></svg>
        </OutlineButton>
      </DateRow>
      <Actions><SoftButton type="button">Save</SoftButton><SoftButton type="button">Cancel</SoftButton></Actions>
    </DialogBody>
  </Dialog>
);

export default function App() {
  return (
    <Window>
      <Global />
      <BrowserChrome />
      <Viewport>
        <Page>
          <TopBar />
          <Body>
            <SideMenu />
            <Content>
              <LineCard />
              <LostCalls />
              <ContactsHistory />
              <Columns>
                <LastClients />
                <Meetings />
              </Columns>
            </Content>
          </Body>
          <Floating>
            <RoundButton aria-label="Add company"><FaBuilding size={16} /></RoundButton>
            <RoundButton aria-label="Add branch"><FaBuilding size={16} /></RoundButton>
            <RoundButton aria-label="Add person"><FaUser size={16} /></RoundButton>
            <RoundButton aria-label="Add issue"><FaTasks size={17} /></RoundButton>
            <RoundButton $main aria-label="Close menu"><FaTimes size={16} /></RoundButton>
          </Floating>
          <IssueDialog />
        </Page>
        <ScrollTrack $w={17}>
          <Arrow dir="up" /><Thumb $grow={846} /><TrackSpace $grow={334} /><Arrow dir="down" color="#444" />
        </ScrollTrack>
      </Viewport>
    </Window>
  );
}
